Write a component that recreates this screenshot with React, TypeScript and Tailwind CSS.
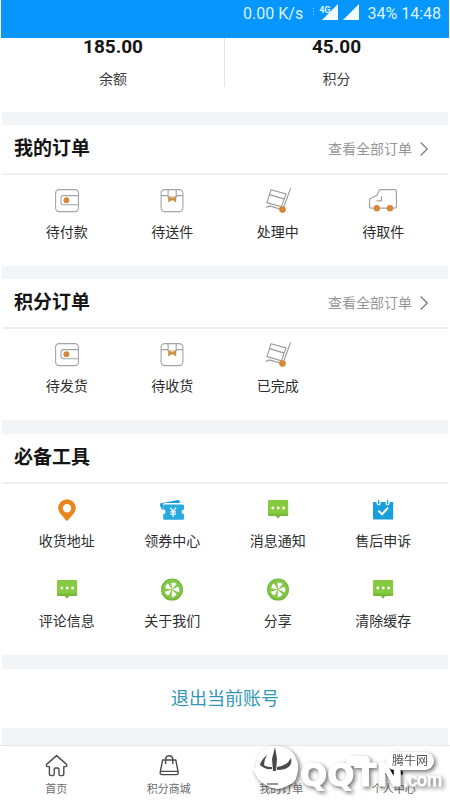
import type { ReactNode } from "react";

type Item = { label: string; icon: ReactNode };

const WalletIcon = () => (
  <svg className="h-6 w-6" viewBox="0 0 24 24" fill="none" stroke="#a3a3a6" strokeWidth="1.1">
    <rect x=".6" y=".6" width="22.8" height="22" rx="3.6" />
    <path d="M23.4 6.6H8.2Q6 6.6 6 8.8v4.8q0 2.2 2.2 2.2h15.2" />
    <circle cx="11.4" cy="11.2" r="2.9" fill="#d98536" stroke="none" />
  </svg>
);

const BoxIcon = () => (
  <svg className="h-6 w-6" viewBox="0 0 24 24" fill="none" stroke="#a3a3a6" strokeWidth="1.1">
    <rect x="1.1" y=".6" width="21.8" height="22" rx="3.6" />
    <path d="M1.1 6.6h7M16.2 6.6h6.7M8.1.6v8M16.2.6v8" />
    <path d="M8.2 7.4h8v6l-4-2.4-4 2.4z" fill="#c99245" stroke="none" />
    <path d="M10.6 8.2h3.2" stroke="#f3e2c6" />
  </svg>
);

const CartIcon = () => (
  <svg className="h-6 w-6 overflow-visible" viewBox="0 0 24 24" fill="none" stroke="#98989b" strokeWidth="1.1">
    <path d="M5 .8 20 4.9l-4.6 13L.9 13.6zM3.5 5.6l14.9 4.5" />
    <path d="M24.6-.6 17.8 18M0 18.4l3.6-1.5L14 20" />
    <circle cx="16.5" cy="20.6" r="3.3" fill="#d98536" stroke="none" />
  </svg>
);

const VanIcon = () => (
  <svg className="h-6 w-7" viewBox="0 0 28 24" fill="none" stroke="#a3a3a6" strokeWidth="1.2">
    <path d="M4.5 19.2H2.2Q.6 19.2.6 17.6V10L8 6.2 10.2 1.6Q10.6.6 11.8.6h14q1.6 0 1.6 1.6v15.4q0 1.6-1.6 1.6H24M11 19.2h7" />
    <path d="M12.4 7.6v4.2H7.6" />
    <circle cx="7.7" cy="19.2" r="3.2" fill="#d98536" stroke="none" />
    <circle cx="21" cy="19.2" r="3.2" fill="#d98536" stroke="none" />
  </svg>
);

const PinIcon = () => (
  <svg className="h-6 w-6" viewBox="0 0 24 24">
    <path fill="#e9871e" fillRule="evenodd" d="M12 1.2A8.8 8.8 0 0 0 3.2 10c0 5 5 8 7.4 12q1.4 1.6 2.8 0c2.4-4 7.4-7 7.4-12A8.8 8.8 0 0 0 12 1.2zm0 4.8a4.2 4.2 0 1 1 0 8.4 4.2 4.2 0 0 1 0-8.4z" />
  </svg>
);

const CouponIcon = () => (
  <svg className="h-6 w-6 overflow-visible" viewBox="0 0 24 24">
    <path fill="#1a9ed4" d="M0 5.6 18 2q1.4-.2 1.6 1l.4 2H4.6Q2.8 5.6 2.8 8v4l-1.4-.4q.6-2-1-2.6z" />
    <path fill="#28aadf" d="M4.6 6.4h18q1.4 0 1.4 1.4v3.6a2.4 2.4 0 0 0 0 4.8v4.2q0 1.4-1.4 1.4h-18q-1.4 0-1.4-1.4v-4.2a2.4 2.4 0 0 0 0-4.8V7.8q0-1.4 1.4-1.4z" />
    <path fill="none" stroke="#fff" strokeWidth="1.3" d="m10.4 9.6 2.8 4 2.8-4M10.4 13.8H16M10.4 16.2H16M13.2 13.6V19" />
  </svg>
);

const ChatIcon = () => (
  <svg className="h-6 w-6" viewBox="0 0 24 24">
    <path fill="#86ca3f" d="M3.4 2h17.4q1.4 0 1.4 1.4v13.2q0 1.4-1.4 1.4H14l-2 2.6-2-2.6H3.4Q2 18 2 16.6V3.4Q2 2 3.4 2z" />
    <path fill="#74b93a" d="M2 15.8v.8Q2 18 3.4 18H10l2 2.6 2-2.6h6.8q1.4 0 1.4-1.4v-.8z" />
    <g fill="#fff">
      <circle cx="6.8" cy="10" r="1.4" />
      <circle cx="12.2" cy="10" r="1.4" />
      <circle cx="17.6" cy="10" r="1.4" />
    </g>
  </svg>
);

const WheelIcon = () => (
  <svg className="h-6 w-6" viewBox="0 0 24 24">
    <circle cx="12" cy="11.6" r="11" fill="#70b43c" />
    <circle cx="12" cy="11.2" r="10" fill="#83c648" />
    <g fill="#fff" transform="translate(12 11.6)">
      {[20, 92, 164, 236, 308].map((deg) => (
        <path key={deg} transform={`rotate(${deg})`} d="M0-.4-3-5.8Q-.4-8.4 2.4-6.8z" />
      ))}
    </g>
  </svg>
);

const CalendarIcon = () => (
  <svg className="h-6 w-6" viewBox="0 0 24 24">
    <path fill="#189fdc" d="M2 4h3.6v1.6a2 2 0 0 0 4 0V4h5v1.6a2 2 0 0 0 4 0V4h3.6v16.4q0 1.2-1.2 1.2H3.2Q2 21.6 2 20.4z" />
    <path stroke="#189fdc" strokeWidth="1.4" strokeLinecap="round" d="M7.6 2.8v3M16.6 2.8v3" />
    <path fill="none" stroke="#fff" strokeWidth="2" d="m7.4 12.6 3.6 3.6 6-6.4" />
  </svg>
);

const HomeIcon = () => (
  <svg className="h-6 w-6" viewBox="0 0 24 24" fill="none" stroke="#4b4b4b" strokeWidth="1.4" strokeLinejoin="round">
    <path d="M12.6 1.6 2.6 10.4q-.8 2 1 2.2h1.8v7.2q0 1.8 1.8 1.8h1.6q1.4 0 1.4-1.6v-4.6q0-1.4 1.4-1.4h2q1.4 0 1.4 1.4V20q0 1.6 1.4 1.6H18q1.8 0 1.8-1.8v-7.2h1.8q1.8-.2 1-2.2z" />
  </svg>
);

const BagIcon = () => (
  <svg className="h-6 w-6" viewBox="0 0 24 24" fill="none" stroke="#4b4b4b" strokeWidth="1.4" strokeLinejoin="round">
    <path d="M5.6 6h13.2l2.4 12.4q.2 2.2-2 2.2h-14q-2.2 0-2-2.2zM3.8 17.4H20.4" />
    <path d="M8.6 10V4.8Q9 1.800 12.2 1.800t3.600 3V10" />
  </svg>
);

const OrderIcon = () => (
  <svg className="h-6 w-6" viewBox="0 0 24 24" fill="none" stroke="#3f3f3f" strokeWidth="1.6">
    <rect x="4" y="2.4" width="18" height="18.6" rx="2" />
    <path d="M8 8h6M8 13h6" />
  </svg>
);

const UserIcon = () => (
  <svg className="h-6 w-6" viewBox="0 0 24 24" fill="#141c26">
    <circle cx="12" cy="8" r="5" />
    <path d="M3 20.6q0-5 4-5h10q4 0 4 5z" />
  </svg>
);

const myOrders: Item[] = [
  { label: "待付款", icon: <WalletIcon /> },
  { label: "待送件", icon: <BoxIcon /> },
  { label: "处理中", icon: <CartIcon /> },
  { label: "待取件", icon: <VanIcon /> },
];

const pointOrders: Item[] = [
  { label: "待发货", icon: <WalletIcon /> },
  { label: "待收货", icon: <BoxIcon /> },
  { label: "已完成", icon: <CartIcon /> },
];

const tools: Item[] = [
  { label: "收货地址", icon: <PinIcon /> },
  { label: "领券中心", icon: <CouponIcon /> },
  { label: "消息通知", icon: <ChatIcon /> },
  { label: "售后申诉", icon: <CalendarIcon /> },
  { label: "评论信息", icon: <ChatIcon /> },
  { label: "关于我们", icon: <WheelIcon /> },
  { label: "分享", icon: <WheelIcon /> },
  { label: "清除缓存", icon: <ChatIcon /> },
];

const tabs: Item[] = [
  { label: "首页", icon: <HomeIcon /> },
  { label: "积分商城", icon: <BagIcon /> },
  { label: "我的订单", icon: <OrderIcon /> },
  { label: "个人中心", icon: <UserIcon /> },
];

function Signal() {
  return (
    <svg className="h-4 w-4" viewBox="0 0 16 16" fill="#f2fbff">
      <path d="M16 0v16H0z" />
    </svg>
  );
}

function Section({ title, items, more }: { title: string; items: Item[]; more?: boolean }) {
  return (
    <section className="bg-white pb-[11px]">
      <div className="flex h-[50px] items-center justify-between border-b-2 border-[#eeeff0] px-3">
        <h2 className="text-[19px] leading-6 font-bold text-[#151515]">{title}</h2>
        {more && (
          <a href="#" className="flex items-center gap-2 pr-2 text-sm text-[#969696]">
            查看全部订单
            <svg className="h-4 w-2" viewBox="0 0 8 16" fill="none" stroke="#858585" strokeWidth="1.4">
              <path d="m.6 1.4 6.6 6.6-6.6 6.6" />
            </svg>
          </a>
        )}
      </div>
      <div className="grid grid-cols-4 px-3">
        {items.map((item) => (
          <button key={item.label} type="button" className="flex flex-col items-center pt-[14px] pb-[13px]">
            {item.icon}
            <span className="mt-[9px] text-sm text-[#2d2d2d]">{item.label}</span>
          </button>
        ))}
      </div>
    </section>
  );
}

function Watermark() {
  return (
    <div className="pointer-events-none absolute right-2 bottom-1 flex items-end text-white drop-shadow-[2px_2px_2px_rgba(0,0,0,0.55)]">
      <svg className="mb-1 h-12 w-12" viewBox="0 0 48 48">
        <path fill="#fff" d="M5 14C11-2 38-2 44 14q4 8 1 17-1 8-10 11-10 6-19 0Q7 38 5 33L0 24q4 1 4-1 0-5 1-9z" />
        <g fill="#4a4a4a">
          <path d="m23 3 2 12-1 12h-3l-1-12z" />
          <path d="M15 11Q9 16 8 21q5 5 12 4v-2q-6 0-8-2 0-5 3-10z" />
          <path d="M25 23q10-1 14-9 2 8-6 11-4 1-8 1z" />
        </g>
        <path stroke="#777" strokeWidth="1.5" d="M15 40h11" />
      </svg>
      <div className="flex items-baseline leading-8">
        <span className="font-['DejaVu_Sans',sans-serif] text-[32px] font-bold [-webkit-text-stroke:1px_white]">QQTN</span>
        <span className="font-['Liberation_Sans',sans-serif] text-[18px] [-webkit-text-stroke:1px_white]">.com</span>
      </div>
      <span className="absolute top-3 right-[72px] h-2.5 w-6 rounded-full bg-white" />
      <span className="absolute top-2 right-2 rounded-full bg-white px-1.5 text-xs leading-[18px] text-[#555]">腾牛网</span>
    </div>
  );
}

export default function App() {
  return (
    <div className="min-h-screen bg-white font-[Roboto,'Noto_Sans_CJK_SC',sans-serif]">
      <header className="mx-px flex h-[38px] items-start justify-end bg-[#0796fd] pt-1 pr-2 text-base leading-5 text-[#d9f3ff]">
        <span>0.00 K/s</span>
        <span className="ml-2 w-1 text-center text-[10px] leading-4 opacity-50">⁝</span>
        <span className="ml-1 text-[9px] leading-3 font-bold">4G</span>
        <div className="-ml-2 flex gap-[5px]">
          <Signal />
          <Signal />
        </div>
        <span className="ml-2">34% 14:48</span>
      </header>

      <main className="mx-0.5 bg-[#f2f5f7]">
        <div className="grid grid-cols-2 bg-white pb-[23px] text-center">
          <div className="h-[49px] border-r border-[#e4e4e4]">
            <p className="text-[19px] leading-[18px] font-bold text-[#151515]">185.00</p>
            <p className="mt-[13px] text-sm text-[#3c3c3c]">余额</p>
          </div>
          <div>
            <p className="text-[19px] leading-[18px] font-bold text-[#151515]">45.00</p>
            <p className="mt-[13px] text-sm text-[#3c3c3c]">积分</p>
          </div>
        </div>
        <div className="h-[13px]" />
        <Section title="我的订单" items={myOrders} more />
        <div className="h-[13px]" />
        <Section title="积分订单" items={pointOrders} more />
        <div className="h-[14px]" />
        <Section title="必备工具" items={tools} />
        <div className="h-[14px]" />
        <button type="button" className="block w-full bg-white py-4 text-[18px] leading-[27px] text-[#3197b8]">
          退出当前账号
        </button>
        <div className="h-[17px]" />
      </main>

      <nav className="relative grid grid-cols-4 border-t border-[#e6e8e9] bg-white pt-2 pb-0.5">
        {tabs.map((tab) => (
          <a key={tab.label} href="#" className="flex flex-col items-center text-[11px] leading-4 text-[#6c6c6c]">
            {tab.icon}
            <span className="mt-1">{tab.label}</span>
          </a>
        ))}
        <Watermark />
      </nav>
    </div>
  );
}
